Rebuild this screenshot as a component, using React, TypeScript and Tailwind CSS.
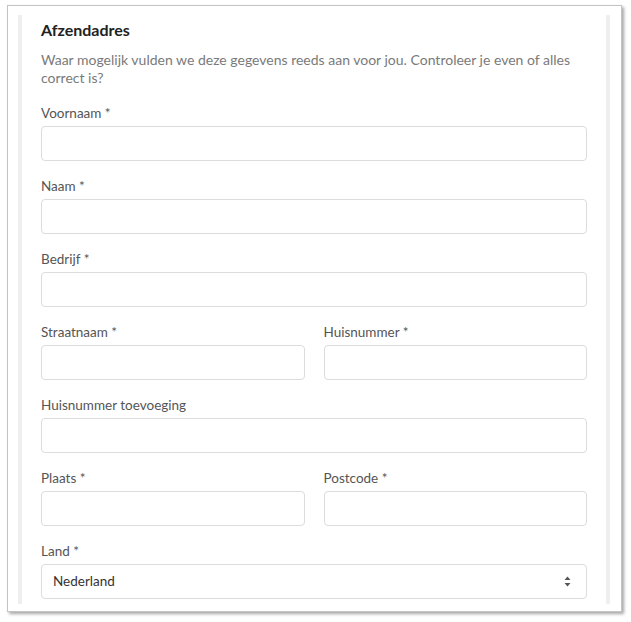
import React from 'react';

interface Field {
  label: string;
}

function Label({ children }: { children: React.ReactNode }) {
  return <div className="h-[20px] leading-[20px] text-[13.5px] text-[#555] mb-[3px]">{children}</div>;
}

function TextInput() {
  return <div className="h-[35px] rounded-[4px] border border-[#dcdcdc] bg-white" />;
}

function FormField({ label }: Field) {
  return (
    <div className="mb-[15px]">
      <Label>{label}</Label>
      <TextInput />
    </div>
  );
}

function UpDown() {
  return (
    <svg width="7" height="11" viewBox="0 0 7 11" className="text-[#555]">
      <path d="M3.5 0.5 L6.5 4 H0.5 Z" fill="currentColor" />
      <path d="M3.5 10.5 L6.5 7 H0.5 Z" fill="currentColor" />
    </svg>
  );
}

export default function App() {
  return (
    <div className="w-[631px] h-[622px] bg-white pt-[5px] pl-[7px]" style={{ fontFamily: 'Lato, "Open Sans", sans-serif' }}>
      <div className="w-[615px] h-[607px] border border-[#c4c4c4] shadow-[2px_2px_3px_rgba(0,0,0,0.35)] pt-[9px] pl-[10px] pr-[11px] pb-[7px] flex">
        <div className="w-[4px] bg-[#efefef]" />
        <div className="flex-1 px-[19px] pt-[5px]">
          <h2 className="text-[16px] font-bold text-[#222] leading-[20px] mb-[11px]">Afzendadres</h2>
          <p className="text-[14px] leading-[18px] text-[#7a7a7a] mb-[16px]">
            Waar mogelijk vulden we deze gegevens reeds aan voor jou. Controleer je even of alles correct is?
          </p>
          <FormField label="Voornaam *" />
          <FormField label="Naam *" />
          <FormField label="Bedrijf *" />
          <div className="grid grid-cols-2 gap-x-[19px]">
            <FormField label="Straatnaam *" />
            <FormField label="Huisnummer *" />
          </div>
          <FormField label="Huisnummer toevoeging" />
          <div className="grid grid-cols-2 gap-x-[19px]">
            <FormField label="Plaats *" />
            <FormField label="Postcode *" />
          </div>
          <div>
            <Label>Land *</Label>
            <div className="h-[35px] rounded-[4px] border border-[#dcdcdc] bg-white flex items-center justify-between pl-[11px] pr-[15px] text-[13.5px] text-[#333]">
              <span>Nederland</span>
              <UpDown />
            </div>
          </div>
        </div>
        <div className="w-[4px] bg-[#efefef]" />
      </div>
    </div>
  );
}
